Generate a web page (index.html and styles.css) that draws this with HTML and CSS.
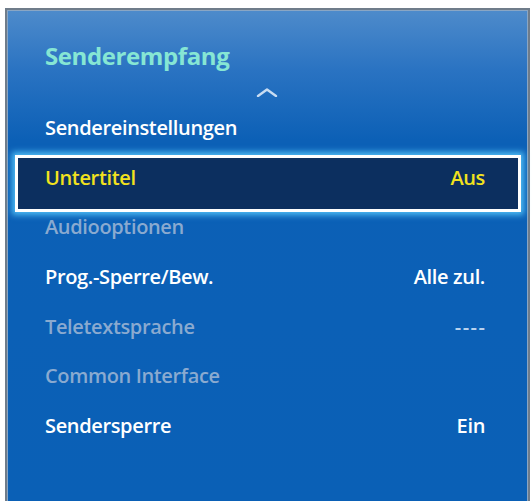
FILE: index.html
```html
<!DOCTYPE html>
<html lang="de">
<head>
<meta charset="utf-8">
<title>Senderempfang</title>
<link rel="stylesheet" href="styles.css">
</head>
<body>
<div class="panel">
  <h1 class="title">Senderempfang</h1>
  <div class="chevron">
    <svg width="22" height="9" viewBox="0 0 22 9"><polyline points="2,8 11,1.5 20,8" fill="none" stroke="#c8dcf2" stroke-width="2.4" stroke-linecap="round" stroke-linejoin="round"/></svg>
  </div>
  <ul class="menu">
    <li class="row"><span class="label">Sendereinstellungen</span></li>
    <li class="row selected"><span class="label">Untertitel</span><span class="value">Aus</span></li>
    <li class="row disabled"><span class="label">Audiooptionen</span></li>
    <li class="row"><span class="label">Prog.-Sperre/Bew.</span><span class="value">Alle zul.</span></li>
    <li class="row disabled"><span class="label">Teletextsprache</span><span class="value dashes">----</span></li>
    <li class="row disabled"><span class="label">Common Interface</span></li>
    <li class="row"><span class="label">Sendersperre</span><span class="value">Ein</span></li>
  </ul>
</div>
</body>
</html>
```
FILE: styles.css
```css
html, body {
  margin: 0;
  padding: 0;
  background: #ffffff;
}
body {
  font-family: "Open Sans", "DejaVu Sans", sans-serif;
  overflow: hidden;
}
.panel {
  box-sizing: border-box;
  margin: 8px 2px 0 5px;
  height: 493px;
  border: 2px solid #6f7c8a;
  border-bottom: none;
  background: linear-gradient(to bottom, #4e8bcb 0px, #2a73c2 60px, #0c60b6 130px, #0a60b6 100%);
  box-shadow: inset 1px 1px 0 #8aa6c4, inset -1px 0 0 #8aa6c4;
  display: flex;
  flex-direction: column;
}
.title {
  margin: 0;
  padding: 31px 0 0 38px;
  font-size: 24px;
  line-height: 30px;
  font-weight: 700;
  letter-spacing: -0.4px;
  color: #86e6d4;
}
.chevron {
  display: flex;
  justify-content: center;
  margin-top: 17px;
  padding-right: 2px;
  height: 9px;
}
.chevron svg { display: block; }
.menu {
  list-style: none;
  margin: 6px 0 0 0;
  padding: 0 43px 0 38px;
}
.row {
  display: flex;
  justify-content: space-between;
  height: 49.7px;
  line-height: 50px;
  font-size: 20px;
  font-weight: 600;
  letter-spacing: -0.35px;
  color: #ffffff;
}
.row.disabled {
  color: #8aaad0;
}
.value.dashes {
  color: #b9d2ee;
  letter-spacing: 1.5px;
  margin-right: -1.5px;
}
.row.selected {
  box-sizing: border-box;
  height: 57px;
  margin: 2.3px -36px -9.6px -30px;
  padding: 0 33px 0 27px;
  border: 3px solid #ffffff;
  background: #0c2f5f;
  line-height: 39px;
  color: #f2e21e;
  box-shadow: 0 0 6px 3px rgba(90, 205, 255, 0.85);
  position: relative;
  z-index: 1;
}
```
